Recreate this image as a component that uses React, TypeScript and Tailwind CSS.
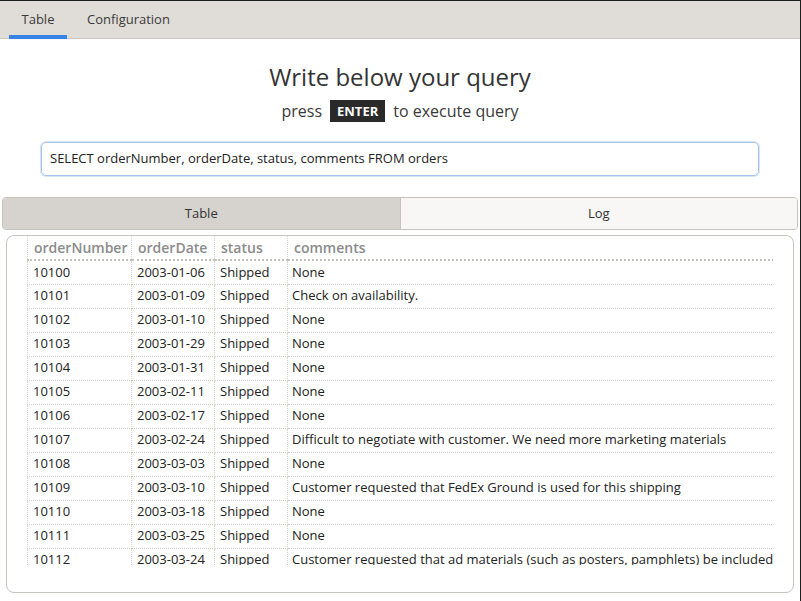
import React from 'react';

const rows: [string, string, string, string][] = [
  ['10100', '2003-01-06', 'Shipped', 'None'],
  ['10101', '2003-01-09', 'Shipped', 'Check on availability.'],
  ['10102', '2003-01-10', 'Shipped', 'None'],
  ['10103', '2003-01-29', 'Shipped', 'None'],
  ['10104', '2003-01-31', 'Shipped', 'None'],
  ['10105', '2003-02-11', 'Shipped', 'None'],
  ['10106', '2003-02-17', 'Shipped', 'None'],
  ['10107', '2003-02-24', 'Shipped', 'Difficult to negotiate with customer. We need more marketing materials'],
  ['10108', '2003-03-03', 'Shipped', 'None'],
  ['10109', '2003-03-10', 'Shipped', 'Customer requested that FedEx Ground is used for this shipping'],
  ['10110', '2003-03-18', 'Shipped', 'None'],
  ['10111', '2003-03-25', 'Shipped', 'None'],
  ['10112', '2003-03-24', 'Shipped', 'Customer requested that ad materials (such as posters, pamphlets) be included in the shipment'],
];

const cols = ['orderNumber', 'orderDate', 'status', 'comments'];
const widths = ['w-[104px]', 'w-[83px]', 'w-[73px]', 'w-[486px]'];

const App: React.FC = () => {
  return (
    <div
      className="w-[801px] h-[601px] bg-white flex flex-col border-t border-r border-[#1b1f1d] overflow-hidden text-[#2e3436]"
      style={{ fontFamily: '"Open Sans", "Noto Sans", sans-serif' }}
    >
      <div className="h-[38px] bg-[#e0ddd9] border-b border-[#c9c5c0] flex items-stretch pl-[9px] shrink-0">
        <div className="relative w-[58px] flex items-center justify-center text-[13px] text-[#3a3a3a]">
          Table
          <div className="absolute left-0 right-0 bottom-[-1px] h-[4px] bg-[#3584e4]" />
        </div>
        <div className="ml-[20px] flex items-center text-[13px] text-[#3a3a3a]">Configuration</div>
      </div>

      <div className="flex flex-col items-center pt-[22px] shrink-0">
        <div className="text-[24px] leading-[32px] text-[#333]">Write below your query</div>
        <div className="flex items-center gap-[8px] text-[16px] leading-[22px] mt-[7px] text-[#3a3a3a]">
          <span>press</span>
          <span className="bg-[#2a2a2a] text-white text-[13px] font-bold px-[7px] py-[1px] leading-[20px]">ENTER</span>
          <span>to execute query</span>
        </div>
      </div>

      <div className="px-[41px] mt-[20px] shrink-0">
        <div className="h-[34px] w-[718px] rounded-[5px] border border-[#a9c4e6] shadow-[0_0_0_1px_#d6e4f5] flex items-center pl-[8px] text-[13px] text-[#222]">
          SELECT orderNumber, orderDate, status, comments FROM orders
        </div>
      </div>

      <div className="mx-[2px] mt-[21px] h-[33px] flex rounded-[4px] border border-[#c6c2bd] overflow-hidden shrink-0">
        <div className="flex-1 bg-[#d6d3cf] flex items-center justify-center text-[13px] text-[#333] border-r border-[#c6c2bd]">
          Table
        </div>
        <div className="flex-1 bg-[#f8f7f6] flex items-center justify-center text-[13px] text-[#333]">Log</div>
      </div>

      <div className="mx-[6px] mt-[5px] h-[358px] rounded-[8px] border border-[#c8c4bf] px-[20px] pb-[27px] shrink-0">
        <div className="h-full overflow-hidden w-[746px]">
          <table className="border-collapse table-fixed w-[746px] text-[13px]">
            <thead>
              <tr className="h-[24px]">
                {cols.map((c, i) => (
                  <th
                    key={c}
                    className={`${widths[i]} text-left font-semibold text-[14px] text-[#8b8b8b] px-[6px] border-b-2 border-dotted border-b-[#c4c0bb] ${
                      i < 3 ? 'border-r border-r-[#d6d3cf]' : ''
                    } ${i === 0 ? 'border-l border-l-[#d6d3cf]' : ''}`}
                  >
                    {c}
                  </th>
                ))}
              </tr>
            </thead>
            <tbody>
              {rows.map((r) => (
                <tr key={r[0]} className="h-[24px]">
                  {r.map((v, i) => (
                    <td
                      key={i}
                      className={`${i === 3 ? 'px-[4px]' : 'px-[5px]'} whitespace-nowrap overflow-hidden text-[#222] border-b border-dotted border-b-[#cfcbc6] ${
                        i < 3 ? 'border-r border-r-[#d6d3cf] border-dotted' : ''
                      } ${i === 0 ? 'border-l border-l-[#d6d3cf] border-dotted' : ''}`}
                    >
                      {v}
                    </td>
                  ))}
                </tr>
              ))}
            </tbody>
          </table>
        </div>
      </div>
    </div>
  );
};

export default App;
